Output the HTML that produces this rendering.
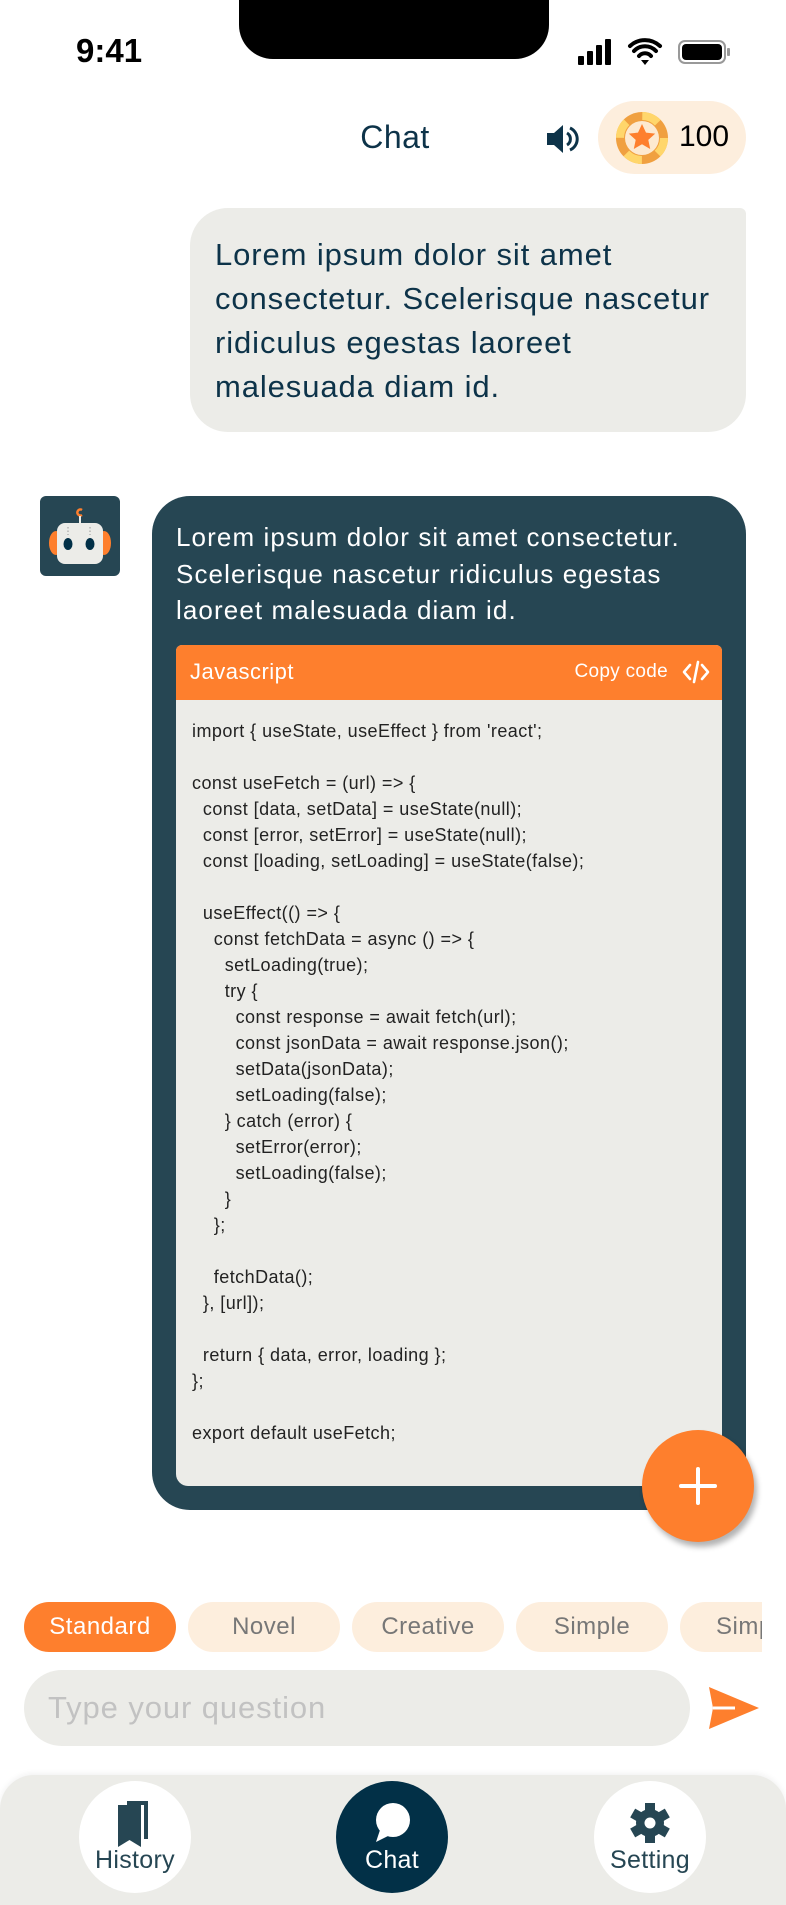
<!DOCTYPE html>
<html><head><meta charset="utf-8"><style>
*{margin:0;padding:0;box-sizing:border-box}
body{width:786px;height:1892px;background:#fff;font-family:"Liberation Sans",sans-serif;position:relative;overflow:hidden;color:#0d3349}
.abs{position:absolute}
.code div{height:26px;line-height:26px;white-space:pre}
</style></head><body>
<div class="abs" style="left:76px;top:32px;font-size:33px;font-weight:bold;color:#000">9:41</div>
<div class="abs" style="left:239px;top:0;width:310px;height:59px;background:#000;border-radius:0 0 34px 34px"></div>
<svg class="abs" style="left:578px;top:38px" width="156" height="30" viewBox="0 0 156 30">
<rect x="0" y="18" width="6" height="9" rx="1" fill="#000"/><rect x="9" y="13" width="6" height="14" rx="1" fill="#000"/><rect x="18" y="7" width="6" height="20" rx="1" fill="#000"/><rect x="27" y="1" width="6" height="26" rx="1" fill="#000"/>
<path d="M52 8a22 22 0 0 1 30 0M56 13a15 15 0 0 1 22 0M61 18a8 8 0 0 1 12 0" stroke="#000" stroke-width="4" fill="none" stroke-linecap="round"/><path d="M63 22l4 5l4-5z" fill="#000"/>
<rect x="101" y="3" width="46" height="22" rx="6" fill="none" stroke="#999" stroke-width="2"/><rect x="104" y="6" width="40" height="16" rx="4" fill="#000"/><rect x="149" y="10" width="3" height="8" rx="1" fill="#999"/>
</svg>
<div class="abs" style="left:330px;top:119px;width:130px;text-align:center;font-size:32px;letter-spacing:0.5px">Chat</div>
<svg class="abs" style="left:545px;top:123px" width="34" height="32" viewBox="0 0 34 32"><path d="M2 10h7l9-8v28l-9-8H2z" fill="#0d3349"/><path d="M22 10a7 7 0 0 1 0 12M25 5a12 12 0 0 1 0 22" stroke="#0d3349" stroke-width="3" fill="none"/></svg>
<div class="abs" style="left:598px;top:101px;width:148px;height:73px;border-radius:37px;background:#fdeedd"></div>
<svg class="abs" style="left:613px;top:109px" width="58" height="58" viewBox="0 0 58 58"><circle cx="29" cy="29" r="26" fill="#f0a040"/><circle cx="29" cy="29" r="22" fill="none" stroke="#ffd66b" stroke-width="8" stroke-dasharray="17.3 17.3"/><circle cx="29" cy="29" r="17" fill="#fde9d0"/><path d="M29 15l4 8.6 9.2 1-6.9 6.3 1.9 9.1-8.2-4.8-8.2 4.8 1.9-9.1-6.9-6.3 9.2-1z" fill="#fe7f2d"/></svg>
<div class="abs" style="left:679px;top:120px;font-size:30px;color:#000">100</div>

<div class="abs" style="left:190px;top:208px;width:556px;height:224px;background:#ecece8;border-radius:38px 6px 38px 38px"></div>
<div class="abs" style="left:215px;top:233px;font-size:31px;line-height:44px;width:530px;letter-spacing:0.9px;white-space:nowrap">Lorem ipsum dolor sit amet<br>consectetur. Scelerisque nascetur<br>ridiculus egestas laoreet<br>malesuada diam id.</div>

<div class="abs" style="left:40px;top:496px;width:80px;height:80px;border-radius:6px;background:#264653"></div>
<svg class="abs" style="left:40px;top:496px" width="80" height="80" viewBox="0 0 80 80"><path d="M42 14a3 3 0 1 0 0 5" stroke="#fe7f2d" stroke-width="2.5" fill="none"/><line x1="40" y1="20" x2="40" y2="27" stroke="#ecece8" stroke-width="2"/><ellipse cx="16" cy="47" rx="7" ry="12" fill="#fe7f2d"/><ellipse cx="64" cy="47" rx="7" ry="12" fill="#fe7f2d"/><rect x="17" y="27" width="46" height="41" rx="8" fill="#ecece8"/><ellipse cx="28" cy="48" rx="4.5" ry="6" fill="#023047"/><ellipse cx="50" cy="48" rx="4.5" ry="6" fill="#023047"/><path d="M28 31v8M50 31v8" stroke="#999" stroke-width="1" stroke-dasharray="1.5 2"/></svg>

<div class="abs" style="left:152px;top:496px;width:594px;height:1014px;background:#264653;border-radius:38px"></div>
<div class="abs" style="left:176px;top:519px;font-size:26px;line-height:36.5px;color:#fff;width:566px;letter-spacing:1.1px;white-space:nowrap">Lorem ipsum dolor sit amet consectetur.<br>Scelerisque nascetur ridiculus egestas<br>laoreet malesuada diam id.</div>
<div class="abs" style="left:176px;top:645px;width:546px;height:841px;background:#ecece8;border-radius:6px 6px 12px 12px;overflow:hidden">
<div style="height:55px;background:#fe7f2d;color:#fff;position:relative"><span style="position:absolute;left:14px;top:14px;font-size:22px;letter-spacing:0.5px">Javascript</span><span style="position:absolute;right:54px;top:16px;font-size:19px;letter-spacing:0.3px">Copy code</span>
<svg style="position:absolute;right:12px;top:14px" width="28" height="26" viewBox="0 0 28 26"><path d="M8 6L2 13l6 7M20 6l6 7-6 7M16 3l-4 20" stroke="#fff" stroke-width="2.6" fill="none" stroke-linecap="round" stroke-linejoin="round"/></svg></div>
<div class="code" style="position:absolute;left:16px;top:73px;font-size:18px;color:#222;letter-spacing:0.45px">
<div>import { useState, useEffect } from 'react';</div><div> </div>
<div>const useFetch = (url) =&gt; {</div>
<div>  const [data, setData] = useState(null);</div>
<div>  const [error, setError] = useState(null);</div>
<div>  const [loading, setLoading] = useState(false);</div><div> </div>
<div>  useEffect(() =&gt; {</div>
<div>    const fetchData = async () =&gt; {</div>
<div>      setLoading(true);</div>
<div>      try {</div>
<div>        const response = await fetch(url);</div>
<div>        const jsonData = await response.json();</div>
<div>        setData(jsonData);</div>
<div>        setLoading(false);</div>
<div>      } catch (error) {</div>
<div>        setError(error);</div>
<div>        setLoading(false);</div>
<div>      }</div>
<div>    };</div><div> </div>
<div>    fetchData();</div>
<div>  }, [url]);</div><div> </div>
<div>  return { data, error, loading };</div>
<div>};</div><div> </div>
<div>export default useFetch;</div>
</div></div>

<div class="abs" style="left:642px;top:1430px;width:112px;height:112px;border-radius:50%;background:#fe7f2d;box-shadow:3px 5px 6px rgba(0,0,0,.3)"></div>
<svg class="abs" style="left:678px;top:1466px" width="40" height="40" viewBox="0 0 40 40"><path d="M20 3v34M3 20h34" stroke="#fff" stroke-width="4" stroke-linecap="round"/></svg>

<div class="abs" style="left:24px;top:1602px;width:152px;height:50px;border-radius:25px;background:#fe7f2d;color:#fff;font-size:24px;text-align:center;line-height:50px;letter-spacing:0.5px">Standard</div>
<div class="abs" style="left:188px;top:1602px;width:152px;height:50px;border-radius:25px;background:#fdeedd;color:#777;font-size:24px;text-align:center;line-height:50px;letter-spacing:0.5px">Novel</div>
<div class="abs" style="left:352px;top:1602px;width:152px;height:50px;border-radius:25px;background:#fdeedd;color:#777;font-size:24px;text-align:center;line-height:50px;letter-spacing:0.5px">Creative</div>
<div class="abs" style="left:516px;top:1602px;width:152px;height:50px;border-radius:25px;background:#fdeedd;color:#777;font-size:24px;text-align:center;line-height:50px;letter-spacing:0.5px">Simple</div>
<div class="abs" style="left:680px;top:1602px;width:82px;height:50px;overflow:hidden"><div style="width:152px;height:50px;border-radius:25px;background:#fdeedd;color:#777;font-size:24px;line-height:50px;padding-left:36px;letter-spacing:0.5px">Simple</div></div>

<div class="abs" style="left:24px;top:1670px;width:666px;height:76px;border-radius:38px;background:#ecece8;color:#c2c2c2;font-size:31px;line-height:76px;padding-left:24px;letter-spacing:0.9px">Type your question</div>
<svg class="abs" style="left:708px;top:1686px" width="52" height="44" viewBox="0 0 52 44"><path d="M1 1l50 21L1 43l4-21z" fill="#fe7f2d"/><path d="M5 22h22" stroke="#fff" stroke-width="3"/></svg>

<div class="abs" style="left:0;top:1775px;width:786px;height:130px;border-radius:34px 34px 0 0;background:#ecece8;box-shadow:0 -2px 6px rgba(0,0,0,.05)"></div>
<div class="abs" style="left:79px;top:1781px;width:112px;height:112px;border-radius:50%;background:#fff"></div>
<div class="abs" style="left:336px;top:1781px;width:112px;height:112px;border-radius:50%;background:#023047"></div>
<div class="abs" style="left:594px;top:1781px;width:112px;height:112px;border-radius:50%;background:#fff"></div>
<svg class="abs" style="left:115px;top:1800px" width="40" height="48" viewBox="0 0 40 48"><path d="M12 1h21v38h-4V5H12z" fill="#264653"/><path d="M3 5h23v42l-11.5-7L3 47z" fill="#264653"/></svg>
<svg class="abs" style="left:370px;top:1802px" width="44" height="44" viewBox="0 0 44 44"><circle cx="23" cy="18" r="17" fill="#fff"/><path d="M10 28l-4 12 12-6z" fill="#fff"/></svg>
<svg class="abs" style="left:628px;top:1801px" width="44" height="44" viewBox="0 0 44 44"><g fill="#264653"><circle cx="22" cy="22" r="14"/><rect x="17" y="2" width="10" height="40"/><rect x="17" y="2" width="10" height="40" transform="rotate(60 22 22)"/><rect x="17" y="2" width="10" height="40" transform="rotate(120 22 22)"/></g><circle cx="22" cy="22" r="5.5" fill="#fff"/></svg>
<div class="abs" style="left:74px;top:1846px;width:122px;text-align:center;font-size:25px;color:#264653;letter-spacing:0.3px">History</div>
<div class="abs" style="left:336px;top:1846px;width:112px;text-align:center;font-size:25px;color:#fff;letter-spacing:0.3px">Chat</div>
<div class="abs" style="left:589px;top:1846px;width:122px;text-align:center;font-size:25px;color:#264653;letter-spacing:0.3px">Setting</div>
</body></html>
